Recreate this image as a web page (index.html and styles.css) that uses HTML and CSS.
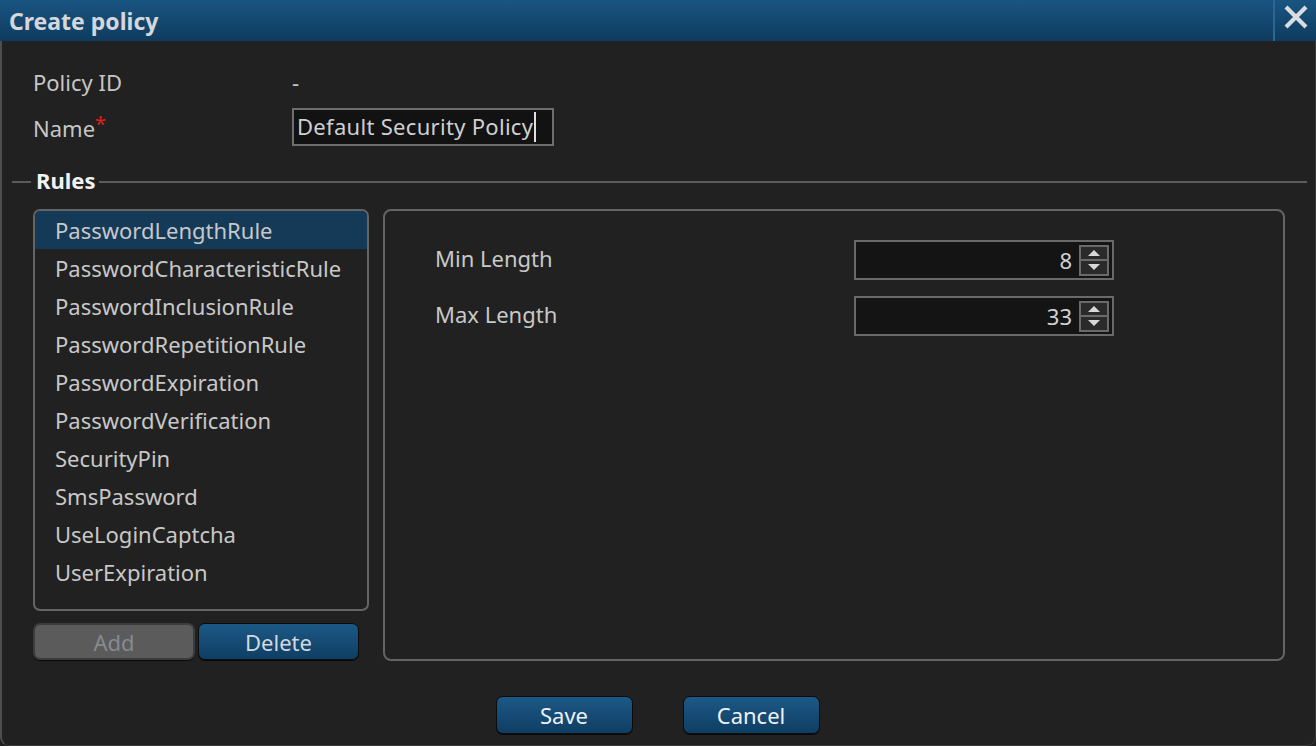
FILE: index.html
```html
<!DOCTYPE html>
<html>
<head>
<meta charset="utf-8">
<link rel="stylesheet" href="styles.css">
</head>
<body>
<div class="dialog">
  <div class="titlebar">
    <div class="title">Create policy</div>
    <div class="close">
      <svg width="26" height="26" viewBox="0 0 26 26"><path d="M3 3 L23 23 M23 3 L3 23" stroke="#d9dde1" stroke-width="4.2" stroke-linecap="butt" fill="none"/></svg>
    </div>
  </div>
  <div class="body">
    <div class="form">
      <div class="label">Policy ID</div>
      <div class="value">-</div>
      <div class="label name">Name<span class="req">*</span></div>
      <div class="value"><div class="textbox">Default Security Policy<span class="caret"></span></div></div>
    </div>
    <div class="legend">
      <span class="lline short"></span>
      <span class="ltext">Rules</span>
      <span class="lline long"></span>
    </div>
    <div class="rules">
      <div class="leftcol">
        <div class="list">
          <div class="item selected">PasswordLengthRule</div>
          <div class="item">PasswordCharacteristicRule</div>
          <div class="item">PasswordInclusionRule</div>
          <div class="item">PasswordRepetitionRule</div>
          <div class="item">PasswordExpiration</div>
          <div class="item">PasswordVerification</div>
          <div class="item">SecurityPin</div>
          <div class="item">SmsPassword</div>
          <div class="item">UseLoginCaptcha</div>
          <div class="item">UserExpiration</div>
        </div>
        <div class="listbtns">
          <div class="btn disabled add">Add</div>
          <div class="btn del">Delete</div>
        </div>
      </div>
      <div class="detail">
        <div class="drow">
          <div class="dlabel">Min Length</div>
          <div class="spinbox"><span class="num">8</span><div class="spin"><span class="up"></span><span class="down"></span></div></div>
        </div>
        <div class="drow">
          <div class="dlabel">Max Length</div>
          <div class="spinbox"><span class="num">33</span><div class="spin"><span class="up"></span><span class="down"></span></div></div>
        </div>
      </div>
    </div>
    <div class="footer">
      <div class="btn big">Save</div>
      <div class="btn big">Cancel</div>
    </div>
  </div>
</div>
</body>
</html>
```
FILE: styles.css
```css
* { box-sizing: border-box; }
html, body { margin: 0; padding: 0; background: #202020; }
body {
  font-family: "Noto Sans", "Open Sans", sans-serif;
  color: #c9c9c9;
  width: 1316px;
  height: 746px;
  overflow: hidden;
}
.dialog {
  width: 1316px;
  height: 746px;
  background: #212121;
  border-left: 2px solid #4d4d4d;
  border-right: 1px solid #3a3a3a;
  border-bottom: 1px solid #3a3a3a;
  border-radius: 0 0 9px 9px;
  display: flex;
  flex-direction: column;
}
.titlebar {
  height: 41px;
  margin-left: -2px;
  margin-right: -1px;
  background: linear-gradient(#195581, #0f3b5f);
  display: flex;
  align-items: center;
  justify-content: space-between;
}
.title {
  padding-left: 9px;
  font-size: 23px;
  font-weight: 700;
  color: #d4d8dc;
  letter-spacing: 0;
  margin-top: 1px;
}
.close {
  height: 41px;
  width: 43px;
  border-left: 2px solid #2a6893;
  display: flex;
  align-items: flex-start;
  justify-content: center;
  padding-top: 4px;
}
.body {
  flex: 1;
  display: flex;
  flex-direction: column;
}
.form {
  display: grid;
  grid-template-columns: 259px 262px;
  grid-template-rows: 40px 47px;
  padding: 21px 0 0 31px;
  align-items: center;
  font-size: 22px;
}
.label { color: #c6c6c6; }
.label.name { margin-top: 5px; }
.req { color: #e0201c; font-size: 20px; position: relative; top: -6px; }
.value { color: #c6c6c6; }
.textbox {
  width: 262px;
  height: 38px;
  border: 2px solid #6e6e6e;
  background: #121212;
  color: #d0d0d0;
  padding-left: 3px;
  line-height: 33px;
  white-space: nowrap;
  display: flex;
  align-items: center;
  margin-top: 2px;
  font-size: 22px;
  letter-spacing: 0.3px;
}
.caret {
  display: inline-block;
  width: 2px;
  height: 30px;
  background: #e0e0e0;
  margin-left: 1px;
}
.legend {
  display: flex;
  align-items: center;
  margin: 19px 8px 0 10px;
  height: 28px;
}
.lline { height: 2px; background: #5c5c5c; }
.lline.short { width: 19px; }
.lline.long { flex: 1; }
.ltext {
  font-size: 22px;
  font-weight: 700;
  color: #f2f2f2;
  padding: 0 4px 0 5px;
  margin-top: -4px;
}
.rules {
  display: flex;
  gap: 14px;
  padding: 0 0 0 31px;
  margin-top: 13px;
}
.leftcol { width: 336px; }
.list {
  height: 402px;
  border: 2px solid #646464;
  border-radius: 7px;
  padding-top: 0;
  overflow: hidden;
}
.item {
  height: 38px;
  line-height: 38px;
  padding-left: 20px;
  font-size: 22px;
  color: #c8c8c8;
  white-space: nowrap;
}
.item.selected { background: #153a57; }
.listbtns {
  display: flex;
  gap: 3px;
  margin-top: 12px;
}
.btn {
  height: 37px;
  border-radius: 7px;
  display: flex;
  align-items: center;
  justify-content: center;
  font-size: 22px;
  color: #d3d8dd;
  background: linear-gradient(#1c5986, #0f3e63);
  border: 1px solid #0c0c0c;
  box-shadow: 0 1px 0 #0a0a0a;
}
.btn.disabled {
  background: #5b5b5b;
  color: #858a90;
  border: 2px solid #3c3c3c;
}
.btn.add { width: 162px; }
.btn.del { width: 161px; }
.detail {
  width: 902px;
  height: 452px;
  border: 2px solid #646464;
  border-radius: 8px;
  padding: 29px 0 0 50px;
}
.drow {
  display: flex;
  align-items: center;
  height: 40px;
  margin-bottom: 16px;
}
.dlabel {
  width: 419px;
  font-size: 22px;
  color: #c8c8c8;
  margin-top: -4px;
}
.spinbox {
  width: 260px;
  height: 40px;
  border: 2px solid #6a6a6a;
  background: #141414;
  display: flex;
  align-items: center;
  justify-content: flex-end;
  padding-right: 3px;
}
.num {
  font-size: 22px;
  color: #d2d2d2;
  margin-right: 7px;
}
.spin {
  width: 30px;
  height: 31px;
  border: 2px solid #6a6a6a;
  background: #2a2a2a;
  display: flex;
  flex-direction: column;
}
.spin span {
  flex: 1;
  display: flex;
  align-items: center;
  justify-content: center;
}
.spin .up { border-bottom: 2px solid #6a6a6a; }
.spin .up::after {
  content: "";
  border-left: 6px solid transparent;
  border-right: 6px solid transparent;
  border-bottom: 6px solid #d8d8d8;
}
.spin .down::after {
  content: "";
  border-left: 6px solid transparent;
  border-right: 6px solid transparent;
  border-top: 6px solid #d8d8d8;
}
.footer {
  display: flex;
  justify-content: center;
  gap: 50px;
  margin-top: 35px;
  padding-right: 2px;
}
.btn.big { width: 137px; height: 38px; color: #eef1f4; }
```
